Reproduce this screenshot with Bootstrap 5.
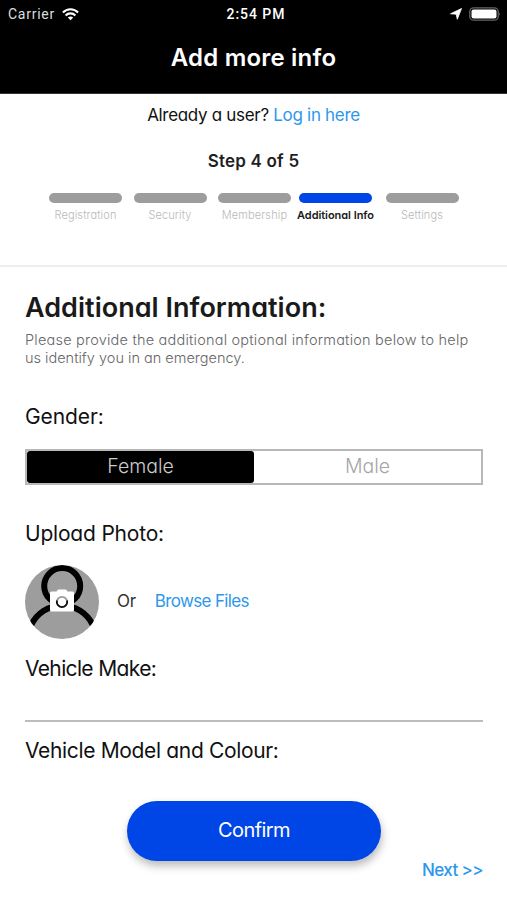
<!DOCTYPE html>
<html lang="en">
<head>
<meta charset="utf-8">
<meta name="viewport" content="width=device-width, initial-scale=1">
<title>Add more info</title>
<link href="https://cdn.jsdelivr.net/npm/bootstrap@5.3.0/dist/css/bootstrap.min.css" rel="stylesheet">
<style>
  body { font-family: Inter, "Liberation Sans", sans-serif; font-feature-settings: "cv11" 1; color: #111; background: #fff; height: 900px; overflow: hidden; }
  .app-header { height: 94px; background: #000; border-bottom: 1px solid #333; }
  .status-bar { height: 28px; padding: 0 6px 0 8px; font-family: Roboto, sans-serif; font-size: 14px; }
  .status-bar > div { flex: 1 1 0; }
  .status-icon { margin-left: 7px; }
  .carrier { letter-spacing: .75px; color: #ddd; }
  .clock { font-weight: 500; letter-spacing: .95px; padding-left: 3px; }
  .page-title { font-size: 24px; line-height: 59px; font-weight: 600; letter-spacing: .2px; }
  .sky { color: #2e97ec; text-decoration: none; }
  .login-line { font-size: 17px; line-height: 24px; margin-top: 9px; letter-spacing: -.31px; }
  .step-count { font-size: 17px; line-height: 24px; margin-top: 22px; font-weight: 600; letter-spacing: .2px; color: #1f1f1f; }
  .stepper { margin: 20px 0 0 49px; height: 72px; }
  .step-item { width: 73px; margin-right: 11.5px; font-size: 11px; line-height: 16px; color: #b8b8b8; font-weight: 300; letter-spacing: .12px; white-space: nowrap; }
  .step-item.is-current { width: 77px; margin-left: -5.5px; color: #1a1a1a; font-weight: 600; letter-spacing: -.05px; }
  .step-bar { width: 73px; height: 10px; border-radius: 5px; background: #9d9d9d; margin: 0 auto 4px; }
  .is-current .step-bar { background: #0045e6; }
  .form-area { border-top: 2px solid #eee; padding: 24px 24px 0 25px; }
  .section-title { font-size: 27px; line-height: 34px; font-weight: 600; letter-spacing: .02px; color: #1a1a1a; margin: 0; }
  .intro { font-size: 14.5px; line-height: 18px; color: #666; font-weight: 300; margin: 6px 0 0; white-space: nowrap; }
  .intro-lead { letter-spacing: .21px; }
  .field-title { font-size: 21px; line-height: 28px; letter-spacing: -.35px; display: block; }
  .gender-title { margin-top: 36px; letter-spacing: -.1px; }
  .gender-toggle { height: 36px; margin-top: 18px; border: 2px solid #b8b8b8; font-size: 19.5px; line-height: 31px; font-weight: 300; }
  .gender-toggle .choice { width: 50%; color: #a5a5a5; text-align: center; }
  .gender-toggle .picked { background: #000; color: #ccc; border-radius: 3px; }
  .upload-title { margin-top: 35px; letter-spacing: -.2px; }
  .upload-row { margin-top: 17px; font-size: 17px; }
  .or-text { margin-left: 18px; letter-spacing: -.3px; color: #333; }
  .browse { margin-left: 19px; letter-spacing: -.65px; }
  .make-title { margin-top: 16px; letter-spacing: -.65px; }
  .line-input { height: 39px; border: 0; border-bottom: 2px solid #bdbdbd; border-radius: 0; padding: 0; }
  .model-title { margin-top: 15px; letter-spacing: -.34px; }
  .confirm-btn { width: 254px; height: 60px; background: #0045e6; color: #fff; border-radius: 30px; font-size: 20px; letter-spacing: -.6px; box-shadow: 1px 5px 8px rgba(0,0,0,.27); margin: 36px 0 0 102px; border: 0; padding: 0 0 2px; }
  .next-row { margin-top: -3px; }
  .next-link { font-size: 17px; line-height: 20px; letter-spacing: -.6px; font-weight: 500; }
</style>
</head>
<body>
<header class="app-header text-white">
  <div class="status-bar d-flex align-items-center">
    <div class="carrier d-flex align-items-center"><span>Carrier</span>
      <svg class="status-icon" width="17" height="13" viewBox="0 0 17 13" fill="none" stroke="#fff" stroke-width="2.1"><path d="M.9 4.400C5.200.1 11.800.1 16.100 4.400M3.600 7.400c2.800-2.700 7-2.700 9.800 0"/><path d="M5.800 9.600c1.500-1.500 3.900-1.500 5.400 0L8.500 12.300z" fill="#fff" stroke="none"/></svg>
    </div>
    <div class="clock text-center">2:54 PM</div>
    <div class="d-flex justify-content-end align-items-center">
      <svg width="12" height="12" viewBox="0 0 12 12" fill="#fff" stroke="#fff" stroke-width=".8" stroke-linejoin="round"><path d="M11.500.5 7.300 11.300 6.200 6.200.5 5.800z"/></svg>
      <svg class="status-icon" width="32" height="14" viewBox="0 0 32 14"><rect x=".8" y=".8" width="28.400" height="12.400" rx="3.800" fill="none" stroke="#666" stroke-width="1.300"/><rect x="2.500" y="2.500" width="25" height="9" rx="2" fill="#fff"/><path d="M30.400 5q1.500 2 0 4z" fill="#777"/></svg>
    </div>
  </div>
  <h1 class="page-title text-center m-0">Add more info</h1>
</header>
<div class="login-line text-center">Already a user? <a class="sky" href="#">Log in here</a></div>
<div class="step-count text-center">Step 4 of 5</div>
<div class="stepper d-flex text-center">
  <div class="step-item"><div class="step-bar"></div>Registration</div>
  <div class="step-item"><div class="step-bar"></div>Security</div>
  <div class="step-item"><div class="step-bar"></div>Membership</div>
  <div class="step-item is-current"><div class="step-bar"></div>Additional Info</div>
  <div class="step-item"><div class="step-bar"></div>Settings</div>
</div>
<main class="form-area">
  <h2 class="section-title">Additional Information:</h2>
  <p class="intro"><span class="intro-lead">Please provide the additional optional information below to help</span><br>us identify you in an emergency.</p>
  <span class="field-title gender-title">Gender:</span>
  <div class="gender-toggle d-flex"><div class="choice picked">Female</div><div class="choice">Male</div></div>
  <span class="field-title upload-title">Upload Photo:</span>
  <div class="upload-row d-flex align-items-center">
    <svg width="74" height="74" viewBox="0 0 74 74">
      <clipPath id="avatar"><circle cx="37" cy="37" r="37"/></clipPath>
      <g clip-path="url(#avatar)"><rect width="74" height="74" fill="#9d9d9d"/>
        <g fill="none" stroke="#000" stroke-width="6"><circle cx="37.200" cy="21" r="18"/><path d="M6.200 60A34 34 0 0 1 67.800 60"/></g></g>
      <path d="M26.500 26.500h5l1.500-2h8l1.500 2h5q1.500 0 1.500 1.500V45q0 1.500-1.500 1.500H26.500q-1.500 0-1.500-1.500V28q0-1.500 1.500-1.500z" fill="#fff"/>
      <circle cx="37" cy="37" r="5.200" fill="#fff" stroke="#999" stroke-width="1.800"/><path d="M32 35.500a5.200 5.200 0 1 0 10 0" fill="none" stroke="#111" stroke-width="1.800"/>
    </svg>
    <span class="or-text">Or</span><a class="sky browse" href="#">Browse Files</a>
  </div>
  <label class="field-title make-title" for="make">Vehicle Make:</label>
  <input id="make" class="line-input form-control">
  <span class="field-title model-title">Vehicle Model and Colour:</span>
  <button class="confirm-btn btn">Confirm</button>
  <div class="next-row text-end"><a class="sky next-link" href="#">Next &gt;&gt;</a></div>
</main>
<script src="https://cdn.jsdelivr.net/npm/bootstrap@5.3.0/dist/js/bootstrap.bundle.min.js"></script>
</body>
</html>
